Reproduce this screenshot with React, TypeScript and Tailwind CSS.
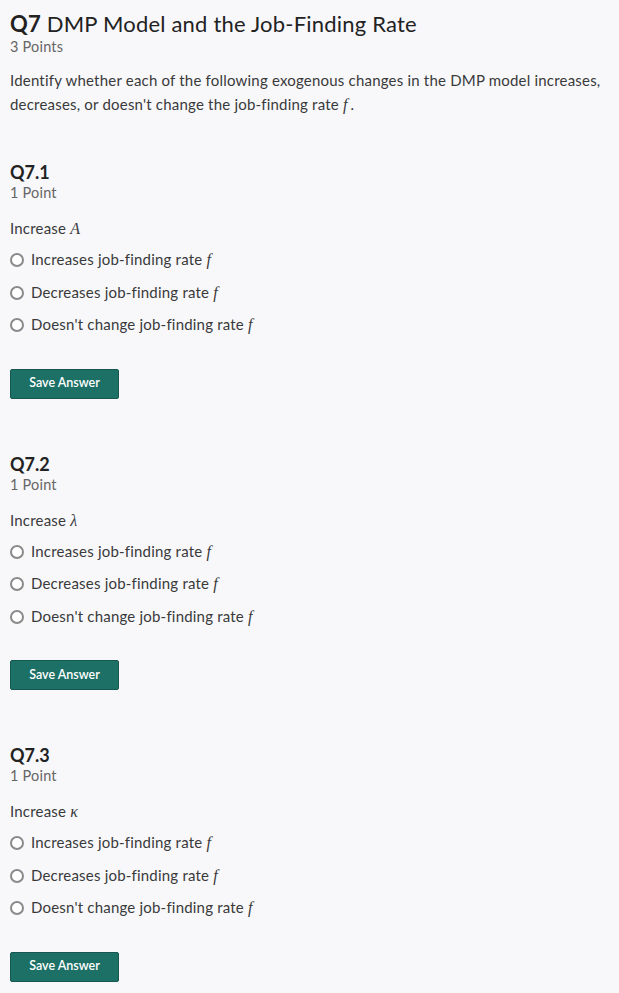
const font = "font-['Lato','Open_Sans',sans-serif]";

function MathVar({ children }: { children: React.ReactNode }) {
  return <span className="font-['Liberation_Serif',serif] italic text-[16px] pr-[3px]">{children}</span>;
}

const options = ["Increases job-finding rate", "Decreases job-finding rate", "Doesn't change job-finding rate"];

function Question({ num, variable }: { num: string; variable: string }) {
  return (
    <section className="pt-[44px] pb-[10px]">
      <h3 className="text-[18px] font-bold leading-[22px] text-[#222]">{num}</h3>
      <div className="text-[14.5px] leading-[20px] text-[#666] tracking-[0.2px]">1 Point</div>
      <p className="mt-[14px] text-[15px] leading-[22px] text-[#3a3a3a] tracking-[0.2px]">
        Increase <MathVar>{variable}</MathVar>
      </p>
      <div className="mt-[4px] flex flex-col">
        {options.map((o) => (
          <label key={o} className="flex items-center gap-[7px] h-[32.5px] text-[15px] text-[#3a3a3a] tracking-[0.2px]">
            <span className="w-[14px] h-[14px] rounded-full border-2 border-[#8a8a8a] bg-white" />
            <span>
              {o} <MathVar>f</MathVar>
            </span>
          </label>
        ))}
      </div>
      <button className="mt-[27px] h-[30px] w-[109px] rounded-[2px] border border-[#16584f] bg-[#1c7066] text-[12.5px] font-semibold text-white">
        Save Answer
      </button>
    </section>
  );
}

export default function App() {
  return (
    <div className={`min-h-[993px] bg-[#f8f8fa] px-[10px] pt-[10px] ${font}`}>
      <h2 className="text-[22px] leading-[28px] text-[#222] tracking-[0.2px]">
        <span className="font-bold">Q7</span> DMP Model and the Job-Finding Rate
      </h2>
      <div className="text-[14.5px] leading-[18px] text-[#666] tracking-[0.2px]">3 Points</div>
      <p className="mt-[12px] text-[15px] leading-[24px] text-[#3a3a3a] tracking-[0.2px]">
        Identify whether each of the following exogenous changes in the DMP model increases, decreases, or doesn't change the job-finding rate <MathVar>f</MathVar>.
      </p>
      <Question num="Q7.1" variable="A" />
      <Question num="Q7.2" variable="λ" />
      <Question num="Q7.3" variable="κ" />
    </div>
  );
}
